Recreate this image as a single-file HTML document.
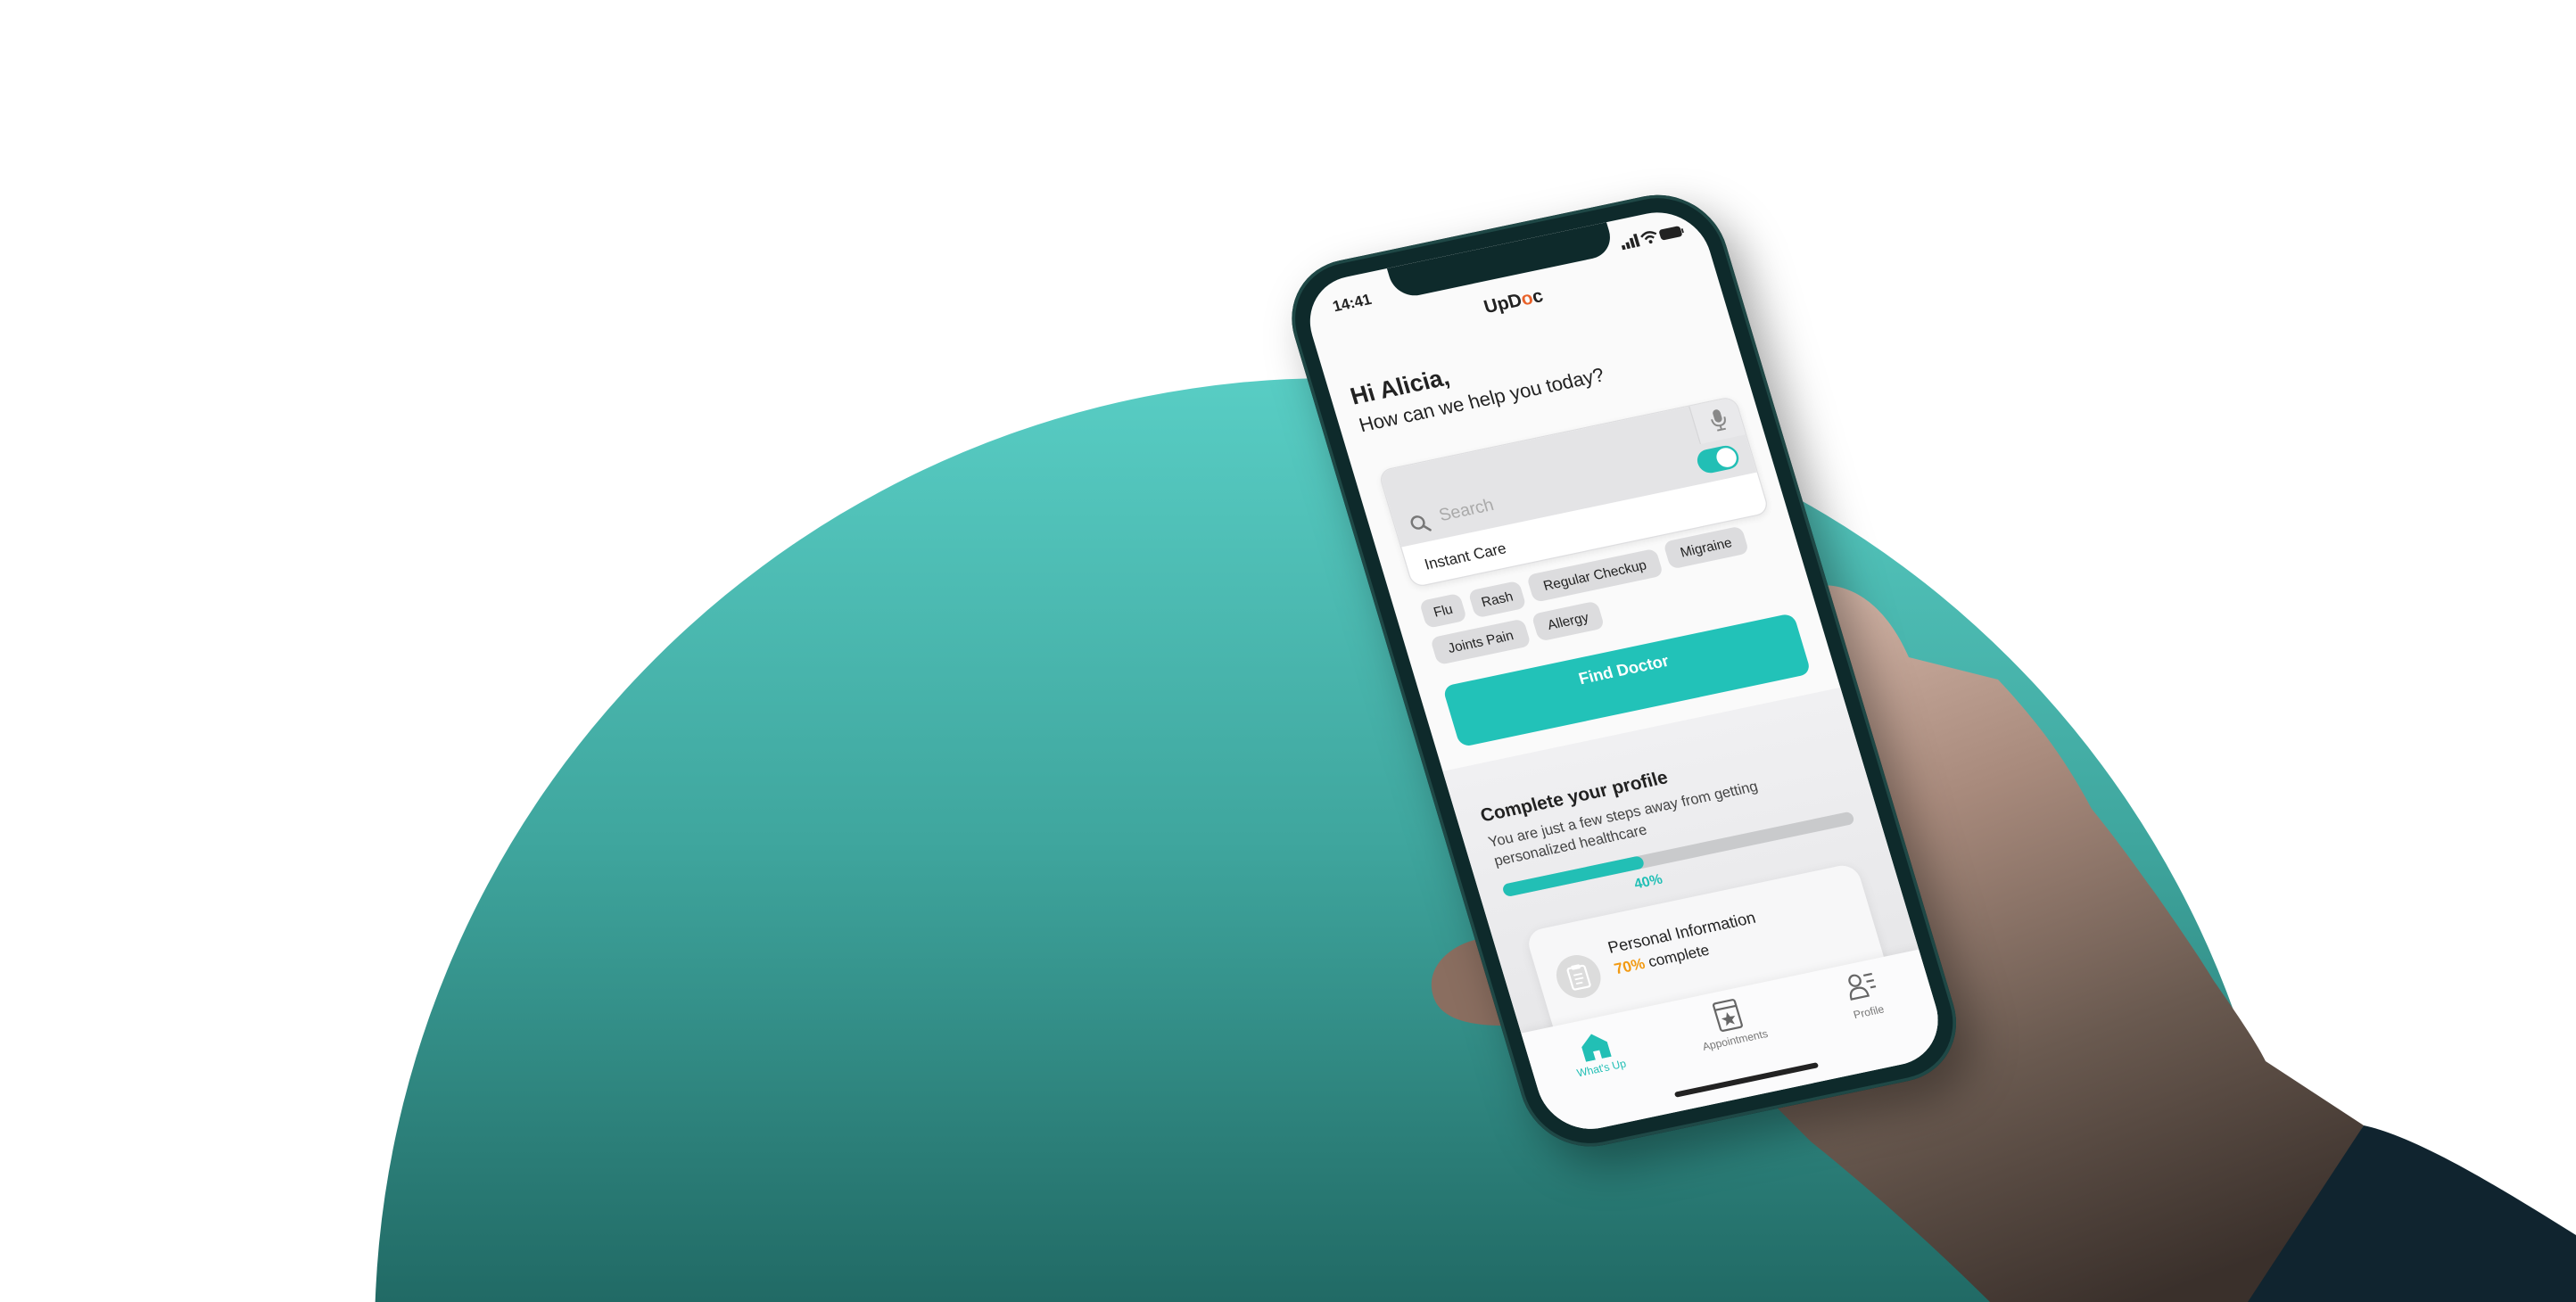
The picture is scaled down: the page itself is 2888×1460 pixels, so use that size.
<!DOCTYPE html>
<html><head><meta charset="utf-8">
<style>
html,body{margin:0;padding:0;}
body{width:2888px;height:1460px;overflow:hidden;background:#fff;position:relative;font-family:"Liberation Sans",sans-serif;}
#bg{position:absolute;left:0;top:0;}
#phone{position:absolute;left:1455px;top:322px;width:375px;height:812px;transform-origin:0 0;transform:matrix(1.189,-0.2505,0.3516,1.175,0,0);}
.body{position:absolute;left:-16px;top:-16px;width:407px;height:844px;border-radius:60px;background:#0e2a2b;box-shadow:0 0 0 3px #1f4846 inset, 10px 20px 40px rgba(0,0,0,0.35);}
.screen{position:absolute;left:0;top:0;width:375px;height:812px;border-radius:46px;background:#fafafa;overflow:hidden;color:#222;}
.abs{position:absolute;}
.chip{position:absolute;height:26px;line-height:26px;background:#dcdcde;border-radius:8px;font-size:12.5px;text-align:center;color:#222;}
</style></head><body>
<svg id="bg" width="2888" height="1460" viewBox="0 0 2888 1460">
<defs>
<linearGradient id="tg" x1="0" y1="424" x2="0" y2="1460" gradientUnits="userSpaceOnUse">
<stop offset="0" stop-color="#58cdc4"/><stop offset="0.5" stop-color="#3fa69e"/><stop offset="1" stop-color="#216a65"/>
</linearGradient>
<linearGradient id="hg" x1="2100" y1="650" x2="2400" y2="1460" gradientUnits="userSpaceOnUse">
<stop offset="0" stop-color="#d0b2a4"/><stop offset="0.3" stop-color="#a88a7c"/><stop offset="0.65" stop-color="#6a5a50"/><stop offset="1" stop-color="#3a302b"/>
</linearGradient>
</defs>
<circle cx="1494" cy="1498" r="1074" fill="url(#tg)"/>
<path d="M1690,1050 C1635,1048 1602,1078 1605,1108 C1608,1140 1640,1152 1700,1150 Z" fill="#8a6e60"/>
<path d="M1990,680 C2030,640 2100,645 2140,737 L2240,762 C2290,815 2320,860 2345,907 C2380,950 2400,980 2415,1000 C2450,1050 2470,1080 2482,1100 C2510,1140 2530,1170 2540,1190 L2650,1262 L2530,1460 L2231,1460 C2150,1380 2080,1320 2030,1280 L1980,1230 Z" fill="url(#hg)"/>
<path d="M2650,1262 C2710,1275 2800,1330 2888,1385 L2888,1460 L2520,1460 Z" fill="#10242f"/>
</svg>

<div id="phone">
<div class="body"></div>
<div class="screen">
  <div class="abs" style="left:84px;top:0;width:207px;height:30px;background:#0e2a2b;border-radius:0 0 22px 22px;"></div>
  <div class="abs" style="left:26px;top:16px;font-size:14px;font-weight:bold;">14:41</div>
  <svg class="abs" style="left:298px;top:14px" width="60" height="16" viewBox="0 0 60 16">
    <rect x="0" y="10" width="3" height="4" fill="#222"/><rect x="4.5" y="8" width="3" height="6" fill="#222"/><rect x="9" y="5" width="3" height="9" fill="#222"/><rect x="13.5" y="2" width="3" height="12" fill="#222"/>
    <path d="M20 6 Q27 0 34 6" stroke="#222" stroke-width="2" fill="none"/><path d="M23 9 Q27 5 31 9" stroke="#222" stroke-width="2" fill="none"/><circle cx="27" cy="12" r="1.6" fill="#222"/>
    <rect x="37" y="3" width="20" height="10" rx="3" fill="#222"/><rect x="57.5" y="6" width="1.5" height="4" fill="#222"/>
  </svg>
  <div class="abs" style="left:0;width:375px;top:44px;text-align:center;font-size:17px;font-weight:bold;">UpD<span style="color:#e8622a">o</span>c</div>
  <div class="abs" style="left:18px;top:96px;font-size:22px;font-weight:bold;">Hi Alicia,</div>
  <div class="abs" style="left:18px;top:126px;font-size:18px;">How can we help you today?</div>

  <div class="abs" style="left:22px;top:180px;width:335px;height:110px;border-radius:12px;background:#fff;border:1px solid #dedee0;overflow:hidden;box-shadow:0 2px 6px rgba(0,0,0,0.08);">
    <div class="abs" style="left:0;top:0;width:335px;height:72px;background:#e4e4e6;"></div>
    <div class="abs" style="right:0;top:0;width:42px;height:36px;background:#e9e9eb;border-left:1px solid #d6d6d8;"></div>
    <svg class="abs" style="right:12px;top:7px" width="16" height="22" viewBox="0 0 16 22"><rect x="4.5" y="1" width="7" height="12" rx="3.5" fill="#888"/><path d="M2 9 Q2 16 8 16 Q14 16 14 9" stroke="#888" stroke-width="1.6" fill="none"/><path d="M8 16 V20 M4 20 H12" stroke="#888" stroke-width="1.6"/></svg>
    <svg class="abs" style="left:14px;top:46px" width="18" height="18" viewBox="0 0 18 18"><circle cx="7" cy="7" r="5.5" stroke="#777" stroke-width="2" fill="none"/><path d="M11 11 L16 16" stroke="#777" stroke-width="2.2" stroke-linecap="round"/></svg>
    <div class="abs" style="left:42px;top:43px;font-size:16px;color:#aaa;">Search</div>
    <div class="abs" style="right:12px;top:42px;width:38px;height:22px;border-radius:11px;background:#22bfb5;"><div class="abs" style="right:2px;top:2px;width:18px;height:18px;border-radius:9px;background:#fff;"></div></div>
    <div class="abs" style="left:16px;top:84px;font-size:14px;">Instant Care</div>
  </div>

  <div class="chip" style="left:24px;top:305px;width:38px;">Flu</div>
  <div class="chip" style="left:70px;top:305px;width:48px;">Rash</div>
  <div class="chip" style="left:126px;top:302px;width:122px;">Regular Checkup</div>
  <div class="chip" style="left:256px;top:298px;width:74px;">Migraine</div>
  <div class="chip" style="left:24px;top:340px;width:88px;">Joints Pain</div>
  <div class="chip" style="left:120px;top:338px;width:62px;">Allergy</div>

  <div class="abs" style="left:22px;top:386px;width:331px;height:58px;border-radius:10px;background:#22c2b8;color:#fff;font-size:15px;font-weight:bold;text-align:center;line-height:40px;">Find Doctor</div>

  <div class="abs" style="left:0;top:462px;width:375px;height:350px;background:linear-gradient(#f0f0f2,#e4e4e6);"></div>
  <div class="abs" style="left:22px;top:500px;font-size:17px;font-weight:bold;">Complete your profile</div>
  <div class="abs" style="left:22px;top:526px;font-size:13.5px;color:#444;line-height:18px;">You are just a few steps away from getting<br>personalized healthcare</div>
  <div class="abs" style="left:22px;top:575px;width:330px;height:12px;border-radius:6px;background:#c9cacc;"><div style="width:40%;height:12px;border-radius:6px;background:#22bfb5;"></div></div>
  <div class="abs" style="left:140px;top:592px;font-size:13px;font-weight:bold;color:#22bfb5;">40%</div>

  <div class="abs" style="left:30px;top:622px;width:312px;height:120px;border-radius:16px;background:#f7f7f8;box-shadow:0 2px 10px rgba(0,0,0,0.08);">
    <div class="abs" style="left:16px;top:30px;width:40px;height:40px;border-radius:20px;background:#dcdcdc;"></div>
    <svg class="abs" style="left:26px;top:38px" width="20" height="24" viewBox="0 0 20 24"><rect x="2" y="3" width="16" height="20" rx="2" stroke="#fff" stroke-width="1.8" fill="none"/><rect x="6" y="1" width="8" height="4" rx="1" fill="#fff"/><path d="M6 10H14M6 14H14M6 18H12" stroke="#fff" stroke-width="1.5"/></svg>
    <div class="abs" style="left:70px;top:22px;font-size:15px;">Personal Information</div>
    <div class="abs" style="left:70px;top:42px;font-size:14px;"><span style="color:#f29a12;font-weight:bold;">70%</span> complete</div>
  </div>

  <div class="abs" style="left:0;top:712px;width:375px;height:100px;background:#fbfbfc;box-shadow:0 -2px 8px rgba(0,0,0,0.05);">
    <svg class="abs" style="left:48px;top:12px" width="28" height="26" viewBox="0 0 28 26"><path d="M2 12 L14 2 L26 12 V26 H17 V18 H11 V26 H2 Z" fill="#22bfb5"/></svg>
    <div class="abs" style="left:30px;top:42px;width:64px;text-align:center;font-size:10px;color:#22bfb5;">What's Up</div>
    <svg class="abs" style="left:176px;top:8px" width="24" height="30" viewBox="0 0 24 30"><rect x="2" y="2" width="20" height="26" rx="2" stroke="#666" stroke-width="1.8" fill="none"/><path d="M2 8H22" stroke="#666" stroke-width="1.8"/><path d="M12 12 L13.8 16.5 L18.5 16.8 L14.8 19.8 L16 24.3 L12 21.7 L8 24.3 L9.2 19.8 L5.5 16.8 L10.2 16.5 Z" fill="#666"/></svg>
    <div class="abs" style="left:148px;top:42px;width:80px;text-align:center;font-size:10px;color:#777;">Appointments</div>
    <svg class="abs" style="left:300px;top:8px" width="28" height="26" viewBox="0 0 28 26"><circle cx="10" cy="8" r="5" stroke="#666" stroke-width="1.8" fill="none"/><path d="M2 24 Q2 15 10 15 Q18 15 18 24 Z" stroke="#666" stroke-width="1.8" fill="none"/><path d="M19 5H27M20 11H27M22 17H27" stroke="#666" stroke-width="1.8"/></svg>
    <div class="abs" style="left:290px;top:42px;width:48px;text-align:center;font-size:10px;color:#777;">Profile</div>
    <div class="abs" style="left:120px;top:82px;width:135px;height:5px;border-radius:3px;background:#222;"></div>
  </div>
</div>
</div>
</body></html>
